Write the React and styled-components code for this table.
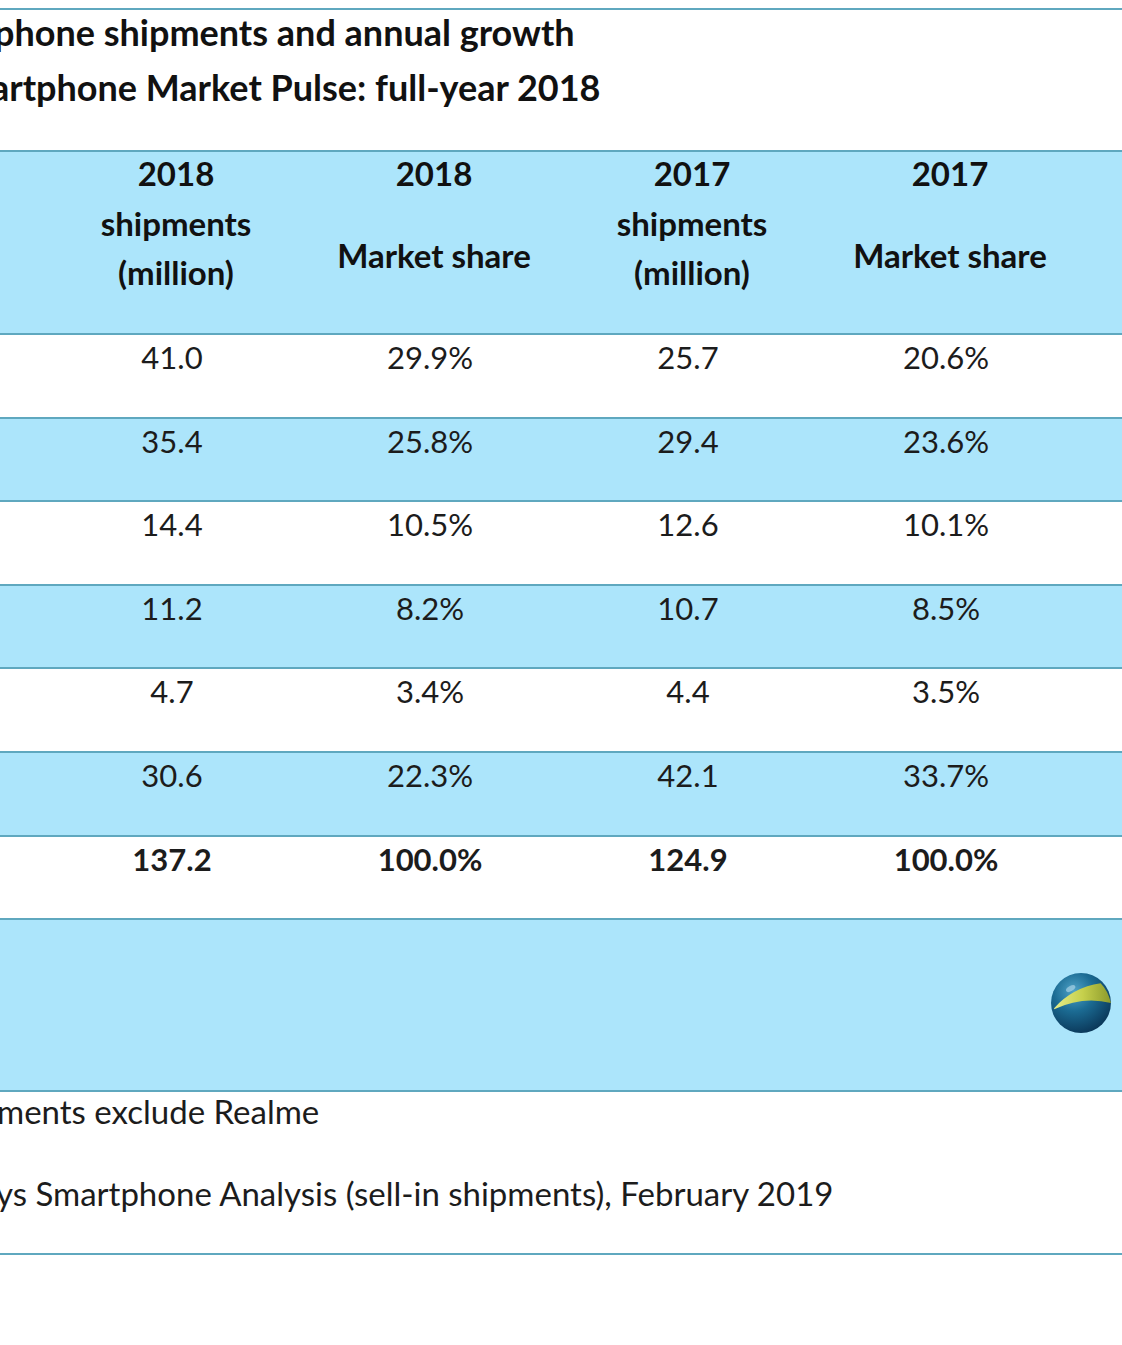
import React from 'react'
import styled, { createGlobalStyle } from 'styled-components'

// global reset
const GlobalStyle = createGlobalStyle`
html, body {
  margin: 0;
  padding: 0;
  background: #ffffff;
  overflow: hidden;
}
body {
  font-family: Lato, "Open Sans", "Liberation Sans", sans-serif;
  color: #1c1c1c;
}
`

const RULE = '#5fa8bf'
const BLUE = '#ace5fb'

// styled components
const Page = styled.div`
width: 1122px;
height: 1345px;
padding-top: 8px;
box-sizing: border-box;
overflow: hidden;
`
const Band = styled.div`
box-sizing: border-box;
height: ${p => p.$h}px;
background: ${p => (p.$blue ? BLUE : '#ffffff')};
border-top: 2px solid ${RULE};
border-bottom: ${p => (p.$last ? `2px solid ${RULE}` : 'none')};
`
const TitleBand = styled(Band)`
display: flex;
flex-direction: column;
gap: 12px;
padding-top: 1px;
`
const TitleLine = styled.div`
font-size: 36px;
font-weight: 700;
line-height: 1.2;
white-space: nowrap;
margin-left: ${p => p.$shift}px;
color: #111;
`
const Grid = styled(Band)`
display: grid;
grid-template-columns: 43px repeat(4, 258px) 1fr;
`
const HeadCell = styled.div`
display: flex;
flex-direction: column;
align-items: center;
padding: 2px 0 0 8px;
font-size: 33px;
font-weight: 700;
line-height: 1.2;
color: #111;
`
const HeadLine = styled.span`
margin-top: ${p => p.$gap || 0}px;
white-space: nowrap;
`
const Cell = styled.div`
text-align: center;
padding-top: 4px;
font-size: 31px;
font-weight: ${p => (p.$bold ? 700 : 400)};
line-height: 1.2;
color: #1c1c1c;
`
const LogoBand = styled(Band)`
display: flex;
justify-content: flex-end;
align-items: center;
padding: 0 10px 4px 0;
`
const NoteBand = styled(Band)`
display: flex;
flex-direction: column;
gap: 42px;
padding-top: 0;
`
const Note = styled.div`
font-size: 33px;
line-height: 1.2;
white-space: nowrap;
margin-left: ${p => p.$shift}px;
color: #1c1c1c;
`

const rows = [
    ['41.0', '29.9%', '25.7', '20.6%'],
    ['35.4', '25.8%', '29.4', '23.6%'],
    ['14.4', '10.5%', '12.6', '10.1%'],
    ['11.2', '8.2%', '10.7', '8.5%'],
    ['4.7', '3.4%', '4.4', '3.5%'],
    ['30.6', '22.3%', '42.1', '33.7%'],
]
const total = ['137.2', '100.0%', '124.9', '100.0%']

const Globe = () => (
    <svg width="62" height="62" viewBox="0 0 60 60">
        <defs>
            <radialGradient id="ball" cx="0.38" cy="0.3" r="0.75">
                <stop offset="0" stopColor="#4fa3c8" />
                <stop offset="0.45" stopColor="#1b6b93" />
                <stop offset="1" stopColor="#0a3556" />
            </radialGradient>
            <linearGradient id="swoosh" x1="0" y1="0" x2="1" y2="0">
                <stop offset="0" stopColor="#e4ec8a" />
                <stop offset="0.5" stopColor="#c6d04c" />
                <stop offset="1" stopColor="#8c9a2c" />
            </linearGradient>
        </defs>
        <circle cx="30" cy="30" r="29" fill="url(#ball)" />
        <path d="M4 35 Q22 15 49 11 Q56 18 59 30 Q32 23 4 36 Z" fill="url(#swoosh)" />
        <ellipse cx="20" cy="16" rx="5" ry="2.5" fill="#cfeaf5" opacity="0.5" transform="rotate(-30 20 16)" />
    </svg>
)

export default function App() {
    return (
        <Page>
            <GlobalStyle />
            <TitleBand $h={142}>
                <TitleLine $shift={-6}>phone shipments and annual growth</TitleLine>
                <TitleLine $shift={-9}>artphone Market Pulse: full-year 2018</TitleLine>
            </TitleBand>
            <Grid $h={183} $blue>
                <div />
                <HeadCell>
                    <HeadLine>2018</HeadLine>
                    <HeadLine $gap={10}>shipments</HeadLine>
                    <HeadLine $gap={10}>(million)</HeadLine>
                </HeadCell>
                <HeadCell>
                    <HeadLine>2018</HeadLine>
                    <HeadLine $gap={42}>Market share</HeadLine>
                </HeadCell>
                <HeadCell>
                    <HeadLine>2017</HeadLine>
                    <HeadLine $gap={10}>shipments</HeadLine>
                    <HeadLine $gap={10}>(million)</HeadLine>
                </HeadCell>
                <HeadCell>
                    <HeadLine>2017</HeadLine>
                    <HeadLine $gap={42}>Market share</HeadLine>
                </HeadCell>
            </Grid>
            {rows.map((row, i) => (
                <Grid key={i} $h={83.6} $blue={i % 2 === 1}>
                    <div />
                    {row.map((v, j) => <Cell key={j}>{v}</Cell>)}
                </Grid>
            ))}
            <Grid $h={83.6}>
                <div />
                {total.map((v, j) => <Cell key={j} $bold>{v}</Cell>)}
            </Grid>
            <LogoBand $h={172} $blue>
                <Globe />
            </LogoBand>
            <NoteBand $h={165} $last>
                <Note $shift={-3}>ments exclude Realme</Note>
                <Note $shift={-4}>ys Smartphone Analysis (sell-in shipments), February 2019</Note>
            </NoteBand>
        </Page>
    )
}
